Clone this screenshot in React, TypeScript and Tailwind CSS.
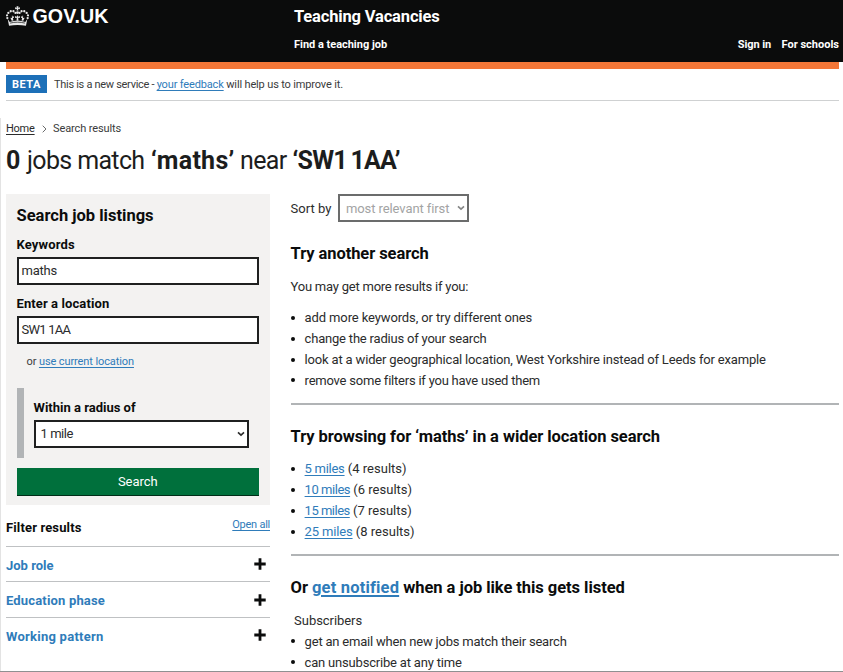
import type { ReactNode } from "react";

const crownBeads: [number, number][] = [
  [4, 35], [3, 27], [7, 20], [14, 15], [22, 15], [28, 20],
  [64, 35], [65, 27], [61, 20], [54, 15], [46, 15], [40, 20],
];

function Crown() {
  return (
    <svg width="23" height="20" viewBox="0 0 68 58" fill="#e8e8e8" className="-mt-[3px]" aria-hidden="true">
      {crownBeads.map(([x, y]) => (
        <circle key={`${x}-${y}`} cx={x} cy={y} r="3.4" />
      ))}
      <path d="M31 0h6l-1.500 4.500L41 3v6l-5.500-1.500L37 13h-6l1.500-5.500L27 9V3l5.500 1.500z" />
      <circle cx="34" cy="19" r="4" />
      <path d="M34 26l2 5 5-2v6l-5-1 1 9h-6l1-9-5 1v-6l5 2zM18 27l2 4 4-1-1 5-3-1 2 8-5 1-4-9 4 1 1-4-1-1zM50 27l-2 4-4-1 1 5 3-1-2 8 5 1 4-9-4 1-1-4 1-1z" />
      <path d="M5 38l6 9c14-5 32-5 46 0l6-9-4 20c-15-3.500-35-3.500-50 0z" />
      <path d="M12 50c14-3.500 30-3.500 44 0" stroke="#0b0c0c" strokeWidth="2" fill="none" />
    </svg>
  );
}

function Link({ children, className = "" }: { children: ReactNode; className?: string }) {
  return (
    <a href="#" className={`text-[#2f7cba] underline decoration-1 underline-offset-[1.5px] ${className}`}>
      {children}
    </a>
  );
}

function Bullet({ children, className = "" }: { children: ReactNode; className?: string }) {
  return (
    <li className={`flex h-[20.85px] items-center ${className}`}>
      <span className="mr-[10px] size-1 shrink-0 rounded-full bg-[#0b0c0c]" />
      <span>{children}</span>
    </li>
  );
}

function Chevron({ className = "" }: { className?: string }) {
  return (
    <svg width="8" height="6" viewBox="0 0 8 6" className={className} aria-hidden="true">
      <path d="M1 1.300L4 4.200L7 1.300" fill="none" stroke="currentColor" strokeWidth="1.600" />
    </svg>
  );
}

function Plus() {
  return (
    <svg width="12" height="12" viewBox="0 0 12 12" className="-mt-[1px] mr-[4px]" aria-hidden="true">
      <path d="M6 0.300V11.700M0.300 6H11.700" stroke="#0b0c0c" strokeWidth="2.800" />
    </svg>
  );
}

function Facet({ label, className }: { label: string; className: string }) {
  return (
    <div className="flex h-[35.5px] items-center justify-between border-t border-[#bfc1c3] pt-[1px]">
      <h3 className={`pt-[1.3px] font-bold text-[#2f7cba] ${className}`}>{label}</h3>
      <Plus />
    </div>
  );
}

function Header() {
  return (
    <header>
      <div className="h-[62px] bg-[#0b0c0c] pl-[6px] pr-1 pt-1 font-bold text-white">
        <div className="flex h-[26px] items-center">
          <div className="flex w-[288px] items-center">
            <Crown />
            <span className="-mt-[2px] ml-[3.5px] font-['Liberation_Sans',sans-serif] text-[19.7px] leading-6">GOV.UK</span>
          </div>
          <span className="text-[16.5px] tracking-[-0.16px]">Teaching Vacancies</span>
        </div>
        <nav className="flex h-[30px] items-center pl-[288px] text-[11px]">
          <span className="tracking-[-0.02px]">Find a teaching job</span>
          <span className="ml-auto tracking-[-0.1px]">Sign in</span>
          <span className="ml-[10.5px]">For schools</span>
        </nav>
      </div>
      <div className="ml-[6px] mr-1 h-[7px] bg-[#f47738]" />
      <div className="ml-[6px] mr-1 flex h-8 items-center border-b border-[#cfd1d2] text-[11px] text-[#3a3b3b]">
        <strong className="-mt-[1px] flex h-[18px] w-[41px] items-center justify-center bg-[#1d70b8] pt-[2px] font-bold tracking-[0.5px] text-white">
          BETA
        </strong>
        <span className="ml-[7px] whitespace-pre pt-[1.5px]">
          <span className="tracking-[-0.3px]">{"This is a new service - "}</span>
          <Link className="tracking-[-0.15px]">your feedback</Link>
          <span className="tracking-[-0.15px]"> will help us to improve it.</span>
        </span>
      </div>
    </header>
  );
}

function SearchPanel() {
  return (
    <form className="h-[310.5px] bg-[#f3f2f1] pl-[10.5px] pr-[11px] pt-[8px] text-[13px]">
      <h2 className="h-[25px] pt-[0.7px] text-[16.5px] font-bold leading-[25px]">Search job listings</h2>
      <div className="mt-[7px] h-[20px] pt-[0.7px] font-bold leading-5 tracking-[0.15px]">Keywords</div>
      <div className="mt-[2.5px] flex h-[28px] items-center border-2 border-[#1f2020] bg-white pl-[3px] tracking-[-0.25px] text-[#2b2c2c]">
        maths
      </div>
      <div className="mt-[8.500px] h-[20px] pt-[0.7px] font-bold leading-5 tracking-[0.1px]">Enter a location</div>
      <div className="mt-[2.500px] flex h-[28px] items-center border-2 border-[#1f2020] bg-white pl-[3px] tracking-[-0.75px] text-[#2b2c2c]">
        SW1 1AA
      </div>
      <div className="mt-[7.5px] h-[20px] pl-[10px] pt-[0.7px] text-[11px] leading-5 tracking-[-0.1px] text-[#3a3b3b]">
        or <Link>use current location</Link>
      </div>
      <div className="mt-[17px] h-[69.5px] border-l-[7px] border-[#b1b4b6] pl-[10px] pr-[10.5px] pt-[9px]">
        <div className="h-[20px] pt-[0.7px] font-bold leading-5">Within a radius of</div>
        <div className="mt-[2.4px] flex h-[28px] items-center justify-between border-2 border-[#1f2020] bg-white pl-[5px] pr-[2px] tracking-[-0.45px] text-[#2b2c2c]">
          1 mile
          <Chevron />
        </div>
      </div>
      <div className="mt-[10px] flex h-[28px] items-center justify-center border-b border-[#002d18] bg-[#00703c] pt-[1px] tracking-[-0.05px] text-white">
        Search
      </div>
    </form>
  );
}

function Sidebar() {
  return (
    <aside className="w-[264px]">
      <SearchPanel />
      <div className="flex h-[41px] justify-between pt-[10.200px]">
        <h2 className="pt-[3px] text-[13px] font-bold leading-5 tracking-[0.14px]">Filter results</h2>
        <Link className="text-[11px] leading-5 tracking-[-0.25px]">Open all</Link>
      </div>
      <Facet label="Job role" className="text-[13px]" />
      <Facet label="Education phase" className="text-[13px] tracking-[0.17px]" />
      <Facet label="Working pattern" className="text-[13px] tracking-[0.25px]" />
    </aside>
  );
}

const heading = "h-[24px] text-[16.5px] font-bold leading-6 text-[#0b0c0c]";

function Results() {
  return (
    <section className="ml-[20.6px] min-w-0 flex-1 text-[13px] text-[#2b2c2c]">
      <div className="flex h-[28px] items-center">
        <span className="w-[47.4px] pt-[1px]">Sort by</span>
        <div className="-mt-[1px] flex h-[28px] w-[131px] items-center justify-between border-2 border-[#6b6c6c] bg-white pl-[6px] pr-[2px] pt-[1px] tracking-[-0.09px] text-[#a3a4a4]">
          most relevant first
          <Chevron className="text-[#858686]" />
        </div>
      </div>
      <h2 className={`mt-[19px] pt-[0.7px] tracking-[-0.08px] ${heading}`}>Try another search</h2>
      <p className="mt-[11px] h-[20px] pt-[0.7px] leading-5 tracking-[-0.23px]">You may get more results if you:</p>
      <ul className="mt-[11px]">
        <Bullet className="tracking-[-0.12px]">add more keywords, or try different ones</Bullet>
        <Bullet className="tracking-[-0.2px]">change the radius of your search</Bullet>
        <Bullet className="tracking-[-0.17px]">look at a wider geographical location, West Yorkshire instead of Leeds for example</Bullet>
        <Bullet className="tracking-[-0.22px]">remove some filters if you have used them</Bullet>
      </ul>
      <hr className="mt-[12.100px] border-t-2 border-[#b1b4b6]" />
      <h2 className={`mt-[19.5px] pt-[0.4px] tracking-[-0.07px] ${heading}`}>Try browsing for ‘maths’ in a wider location search</h2>
      <ul className="mt-[10.4px]">
        <Bullet className="tracking-[0.01px]"><Link className="tracking-[-0.27px]">5 miles</Link> (4 results)</Bullet>
        <Bullet className="tracking-[0.01px]"><Link className="tracking-[-0.46px]">10 miles</Link> (6 results)</Bullet>
        <Bullet className="tracking-[0.01px]"><Link className="tracking-[-0.5px]">15 miles</Link> (7 results)</Bullet>
        <Bullet className="tracking-[0.01px]"><Link className="tracking-[-0.15px]">25 miles</Link> (8 results)</Bullet>
      </ul>
      <hr className="mt-[11.700px] border-t-2 border-[#b1b4b6]" />
      <h2 className={`mt-[20px] tracking-[-0.05px] ${heading}`}>
        Or <Link className="decoration-2 tracking-[0.18px]">get notified</Link> when a job like this gets listed
      </h2>
      <p className="mt-[11px] h-[20.200px] pl-[3.500px] leading-5 tracking-[-0.05px]">Subscribers</p>
      <ul>
        <Bullet className="tracking-[-0.2px]">get an email when new jobs match their search</Bullet>
        <Bullet className="tracking-[-0.19px]">can unsubscribe at any time</Bullet>
      </ul>
    </section>
  );
}

export default function App() {
  return (
    <div className="h-[672px] overflow-hidden border-b border-[#8f9091] bg-white font-[Roboto,sans-serif] text-[#0b0c0c]">
      <Header />
      <div className="h-[570px] border-l border-[#e3e3e3] pl-[5px] pr-1">
        <nav className="mt-[17px] flex h-[22px] items-center text-[11px] text-[#3a3b3b]">
          <a href="#" className="tracking-[-0.25px] text-[#2b2c2c] underline underline-offset-[1.5px]">Home</a>
          <svg width="5" height="8" viewBox="0 0 5 8" className="ml-[7px] mr-[6.500px]" aria-hidden="true">
            <path d="M0.700 0.700L4 4L0.700 7.300" fill="none" stroke="#6a6b6c" strokeWidth="1" />
          </svg>
          <span className="tracking-[-0.12px]">Search results</span>
        </nav>
        <h1 className="mt-[3px] flex h-9 items-center text-[25px] text-[#1c1d1d]">
          <strong className="w-[21px] font-bold">0</strong>
          <span className="w-[124px] tracking-[-0.65px]">jobs match</span>
          <strong className="w-[89px] font-bold tracking-[0.26px]">‘maths’</strong>
          <span className="w-[52.500px] tracking-[-0.66px]">near</span>
          <strong className="whitespace-nowrap font-bold tracking-[-0.75px] [word-spacing:-2px]">‘SW1 1AA’</strong>
        </h1>
        <div className="mt-[15.400px] flex">
          <Sidebar />
          <Results />
        </div>
      </div>
    </div>
  );
}
